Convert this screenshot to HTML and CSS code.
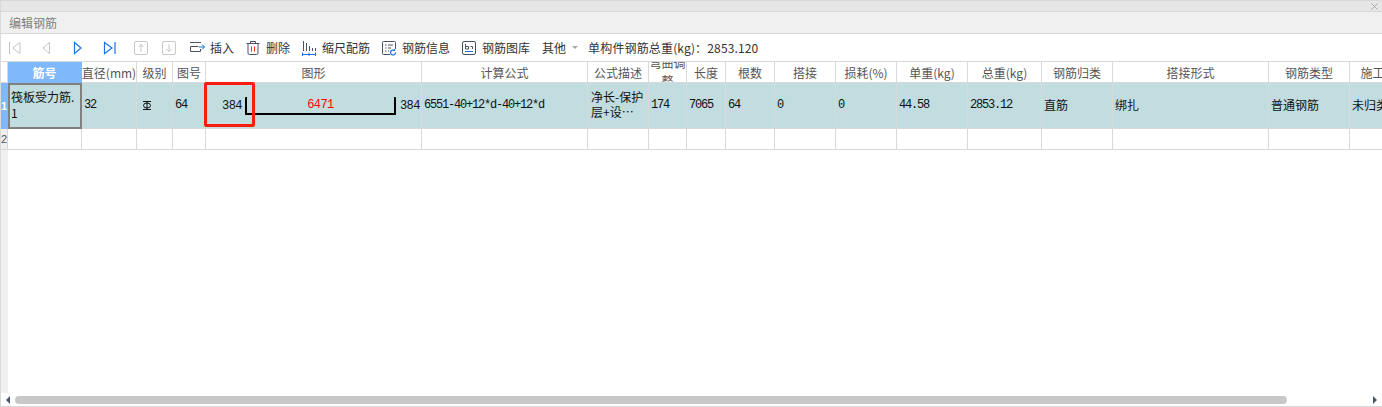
FILE: index.html
```html
<!DOCTYPE html>
<html lang="zh-CN">

<head>
  <meta charset="UTF-8">
  <meta name="viewport" content="width=device-width, initial-scale=1.0">
  <title>编辑钢筋</title>
  <link rel="stylesheet" href="styles.css">
</head>

<body>
  <div class="window">
    <div class="topbar">
      <svg class="close" viewBox="0 0 7 7"><path d="M0.500 0.500l6 6M6.500 0.500l-6 6" fill="none" stroke="#a8a8a8" /></svg>
    </div>
    <div class="titlebar">编辑钢筋</div>

    <div class="toolbar">
      <div class="nav">
        <svg class="icon" viewBox="0 0 16 16"><path d="M3.500 2v12M14 2.500L6.500 8l7.500 5.500z" fill="none" stroke="#c4c4c4" /></svg>
        <svg class="icon" viewBox="0 0 16 16"><path d="M11.500 2.500L5 8l6.500 5.500z" fill="none" stroke="#c4c4c4" /></svg>
        <svg class="icon" viewBox="0 0 16 16"><path d="M4.500 2.500L11 8l-6.500 5.500z" fill="none" stroke="#1a73e8" stroke-width="1.200" /></svg>
        <svg class="icon" viewBox="0 0 16 16"><path d="M2.500 2.500L10 8l-7.500 5.500zM13 2v12" fill="none" stroke="#1a73e8" stroke-width="1.200" /></svg>
      </div>
      <div class="move">
        <svg class="icon" viewBox="0 0 16 16"><rect x="1.500" y="1.500" width="13" height="13" rx="1.500" fill="none" stroke="#c8c8c8" /><path d="M8 12V4.500M5.500 7L8 4.500 10.500 7" fill="none" stroke="#c8c8c8" /></svg>
        <svg class="icon" viewBox="0 0 16 16"><rect x="1.500" y="1.500" width="13" height="13" rx="1.500" fill="none" stroke="#c8c8c8" /><path d="M8 4v7.500M5.500 9L8 11.500 10.500 9" fill="none" stroke="#c8c8c8" /></svg>
      </div>
      <div class="tool">
        <svg class="icon" viewBox="0 0 16 16"><path d="M1 2.500h11M11.500 9v2.500h-10v-5h8" fill="none" stroke="#4a5468" /><path d="M10 7h5.500M13 4.500L15.500 7 13 9.500" fill="none" stroke="#1a73e8" /></svg>
        <span>插入</span>
      </div>
      <div class="tool">
        <svg class="icon" viewBox="0 0 16 16"><path d="M1.500 3.500h13M5.500 3.500V1.500h5v2M3 3.500v9.500a1.500 1.500 0 0 0 1.500 1.500h7a1.500 1.500 0 0 0 1.500-1.500V3.500" fill="none" stroke="#4a5468" /><path d="M6.500 6.500v5M9.500 6.500v5" fill="none" stroke="#e5302a" /></svg>
        <span>删除</span>
      </div>
      <div class="tool">
        <svg class="icon" viewBox="0 0 16 16"><path d="M2.500 1v10M5.500 3v8M8.500 6v5M11.500 8v3M14.500 8v3" fill="none" stroke="#4a5468" /><path d="M1 14.500h14M1.500 12.500v4M8 12.500v4M14.500 12.500v4" fill="none" stroke="#1a73e8" /></svg>
        <span>缩尺配筋</span>
      </div>
      <div class="tool">
        <svg class="icon" viewBox="0 0 16 16"><path d="M9 14.500H2.500a1 1 0 0 1-1-1v-11a1 1 0 0 1 1-1h11a1 1 0 0 1 1 1V9" fill="none" stroke="#4a5468" /><path d="M4 5h1.500M7 5h5M4 8h1.500M7 8h3M4 11h1.500M7 11h1" fill="none" stroke="#4a5468" /><path d="M14.500 12.500a2.500 2.500 0 1 1-1-2M13.500 9v1.500H12" fill="none" stroke="#1a73e8" stroke-width="1.200" /></svg>
        <span>钢筋信息</span>
      </div>
      <div class="tool">
        <svg class="icon" viewBox="0 0 16 16"><rect x="1.500" y="1.500" width="13" height="13" rx="1.500" fill="none" stroke="#4a5468" /><path d="M4.500 4v5h3V6.500h-3M9.500 6.500h2v2.500" fill="none" stroke="#4a5468" /><path d="M4 11.500h8" fill="none" stroke="#1a73e8" /></svg>
        <span>钢筋图库</span>
      </div>
      <div class="tool tool-more">
        <span>其他</span>
        <i class="caret"></i>
      </div>
      <div class="total">单构件钢筋总重(kg)：2853.120</div>
    </div>

    <div class="sheet">
      <div class="row row-head">
        <div class="cell rownum"></div>
        <div class="cell active">筋号</div>
        <div class="cell">直径(mm)</div>
        <div class="cell">级别</div>
        <div class="cell">图号</div>
        <div class="cell">图形</div>
        <div class="cell">计算公式</div>
        <div class="cell">公式描述</div>
        <div class="cell cell-wrap">弯曲调整</div>
        <div class="cell">长度</div>
        <div class="cell">根数</div>
        <div class="cell">搭接</div>
        <div class="cell">损耗(%)</div>
        <div class="cell">单重(kg)</div>
        <div class="cell">总重(kg)</div>
        <div class="cell">钢筋归类</div>
        <div class="cell">搭接形式</div>
        <div class="cell">钢筋类型</div>
        <div class="cell">施工段</div>
      </div>

      <div class="row row-data selected">
        <div class="cell rownum">1</div>
        <div class="cell current">筏板受力筋.<br>1</div>
        <div class="cell num">32</div>
        <div class="cell grade">
          <svg class="grade-icon" viewBox="0 0 10 9"><ellipse cx="5" cy="4.500" rx="3.500" ry="2.500" fill="none" stroke="#000" stroke-width="0.900" /><path d="M5 0v9M1 0.500h8M1 8.500h8" fill="none" stroke="#000" stroke-width="0.900" /></svg>
        </div>
        <div class="cell num">64</div>
        <div class="cell shape-cell">
          <span class="dim">384</span>
          <div class="bar"><span class="dim dim-red">6471</span></div>
          <span class="dim">384</span>
          <div class="mark"></div>
        </div>
        <div class="cell num">6551-40+12*d-40+12*d</div>
        <div class="cell desc">净长-保护<br>层+设…</div>
        <div class="cell num">174</div>
        <div class="cell num">7065</div>
        <div class="cell num">64</div>
        <div class="cell num">0</div>
        <div class="cell num">0</div>
        <div class="cell num">44.58</div>
        <div class="cell num">2853.12</div>
        <div class="cell text">直筋</div>
        <div class="cell text">绑扎</div>
        <div class="cell text">普通钢筋</div>
        <div class="cell text">未归类</div>
      </div>

      <div class="row row-empty">
        <div class="cell rownum">2</div>
        <div class="cell"></div>
        <div class="cell"></div>
        <div class="cell"></div>
        <div class="cell"></div>
        <div class="cell"></div>
        <div class="cell"></div>
        <div class="cell"></div>
        <div class="cell"></div>
        <div class="cell"></div>
        <div class="cell"></div>
        <div class="cell"></div>
        <div class="cell"></div>
        <div class="cell"></div>
        <div class="cell"></div>
        <div class="cell"></div>
        <div class="cell"></div>
        <div class="cell"></div>
        <div class="cell"></div>
      </div>

      <div class="rest"></div>
    </div>

    <div class="scrollbar">
      <i class="arrow arrow-left"></i>
      <div class="track"><div class="thumb"></div></div>
      <i class="arrow arrow-right"></i>
    </div>
  </div>
</body>

</html>
```

FILE: styles.css
```css
* {
  box-sizing: border-box;
}

html,
body {
  height: 100%;
  margin: 0;
  overflow: hidden;
}

body {
  background: #fff;
  color: #333;
  font-family: "Noto Sans CJK SC", "Liberation Sans", sans-serif;
  font-size: 12px;
}

.window {
  border: 1px solid #d9d9d9;
  border-right: none;
  display: flex;
  flex-direction: column;
  height: 407px;
  overflow: hidden;
  width: 1382px;
}

.topbar {
  align-items: center;
  background: #e6e6e6;
  border-bottom: 1px solid #d9d9d9;
  display: flex;
  flex: none;
  height: 11px;
  justify-content: flex-end;
  padding-right: 4px;
}

.close {
  display: block;
  height: 7px;
  width: 7px;
}

.titlebar {
  align-items: center;
  background: #f0f0f0;
  border-bottom: 1px solid #d9d9d9;
  color: #808080;
  display: flex;
  flex: none;
  height: 22px;
  padding-left: 8px;
}

.toolbar {
  align-items: center;
  border-bottom: 1px solid #d9d9d9;
  display: flex;
  flex: none;
  gap: 11px;
  height: 28px;
  padding-left: 5px;
}

.icon {
  display: block;
  flex: none;
  height: 16px;
  width: 16px;
}

.nav {
  display: flex;
  gap: 16px;
}

.move {
  display: flex;
  gap: 12px;
  margin-left: 4px;
  margin-right: 1px;
}

.tool {
  align-items: center;
  display: flex;
  gap: 5px;
}

.tool-more {
  margin-left: 1px;
}

.caret {
  border-left: 3px solid transparent;
  border-right: 3px solid transparent;
  border-top: 3px solid #a8a8a8;
  height: 0;
  margin-left: 1px;
  width: 0;
}

.total {
  letter-spacing: 0.15px;
  margin-left: -1px;
  white-space: nowrap;
}

.sheet {
  display: flex;
  flex: 1;
  flex-direction: column;
  min-height: 0;
}

.row {
  display: grid;
  flex: none;
  grid-template-columns: 7px 74px 55px 36px 33px 216px 166px 61px 38px 39px 49px 61px 61px 71px 74px 71px 156px 81px 58px;
  width: 1408px;
}

.cell {
  align-items: center;
  border-bottom: 1px solid #d9d9d9;
  border-right: 1px solid #d9d9d9;
  display: flex;
  min-width: 0;
  overflow: hidden;
}

.row-head {
  height: 21px;
}

.row-head .cell {
  color: #555;
  justify-content: center;
  text-align: center;
  white-space: nowrap;
}

.row-head .cell-wrap {
  line-height: 18px;
  white-space: normal;
}

.row-head .active {
  background: #7fb8fb;
  border-color: #7fb8fb;
  color: #fff;
  font-weight: 700;
}

.row-data {
  height: 46px;
}

.row-empty {
  height: 21px;
}

.selected .cell {
  background: #c1dde0;
  color: #111;
}

.rownum {
  background: #f0f0f0;
  color: #555;
  font-family: "Liberation Sans", sans-serif;
  font-size: 11px;
  justify-content: center;
}

.row-head .rownum {
  background: #fff;
}

.selected .rownum {
  background: #7fb8fb;
  border-color: #7fb8fb;
  color: #fff;
  font-weight: 700;
}

.selected .current {
  border: 2px solid #808080;
  line-height: 16px;
  padding-bottom: 2px;
  padding-left: 1px;
}

.num {
  font-family: "Liberation Mono", monospace;
  font-size: 12px;
  letter-spacing: -1.2px;
  padding-bottom: 2px;
  padding-left: 2px;
  white-space: nowrap;
}

.text {
  padding-bottom: 3px;
  padding-left: 2px;
  white-space: nowrap;
}

.desc {
  line-height: 15px;
  padding-bottom: 3px;
  padding-left: 3px;
  white-space: nowrap;
}

.grade {
  padding-left: 5px;
}

.grade-icon {
  display: block;
  height: 9px;
  width: 10px;
}

.shape-cell {
  gap: 3px;
  overflow: visible;
  padding-left: 16px;
  position: relative;
}

.dim {
  font-family: "Liberation Mono", monospace;
  font-size: 12px;
  letter-spacing: -0.55px;
  white-space: nowrap;
}

.dim-red {
  color: #f00;
}

.bar {
  align-items: center;
  border: 2px solid #000;
  border-radius: 1px;
  border-top: none;
  display: flex;
  flex: none;
  height: 18px;
  justify-content: center;
  margin-top: 1px;
  margin-right: 1px;
  padding-bottom: 1px;
  width: 151px;
}

.mark {
  border: 3px solid #fb1c10;
  border-radius: 2px;
  height: 45px;
  left: -2px;
  position: absolute;
  top: -1px;
  width: 51px;
}

.rest {
  background: #f0f0f0;
  flex: 1;
  width: 7px;
}

.scrollbar {
  align-items: center;
  display: flex;
  flex: none;
  height: 13px;
  justify-content: space-between;
  padding: 0 5px;
}

.track {
  flex: 1;
  padding: 0 1px 0 5px;
}

.thumb {
  background: #c8c8c8;
  border-radius: 4px;
  height: 8px;
  width: 1272px;
}

.arrow {
  border-bottom: 4px solid transparent;
  border-top: 4px solid transparent;
  flex: none;
  height: 0;
  width: 0;
}

.arrow-left {
  border-right: 4px solid #4a5468;
}

.arrow-right {
  border-left: 4px solid #4a5468;
}
```
